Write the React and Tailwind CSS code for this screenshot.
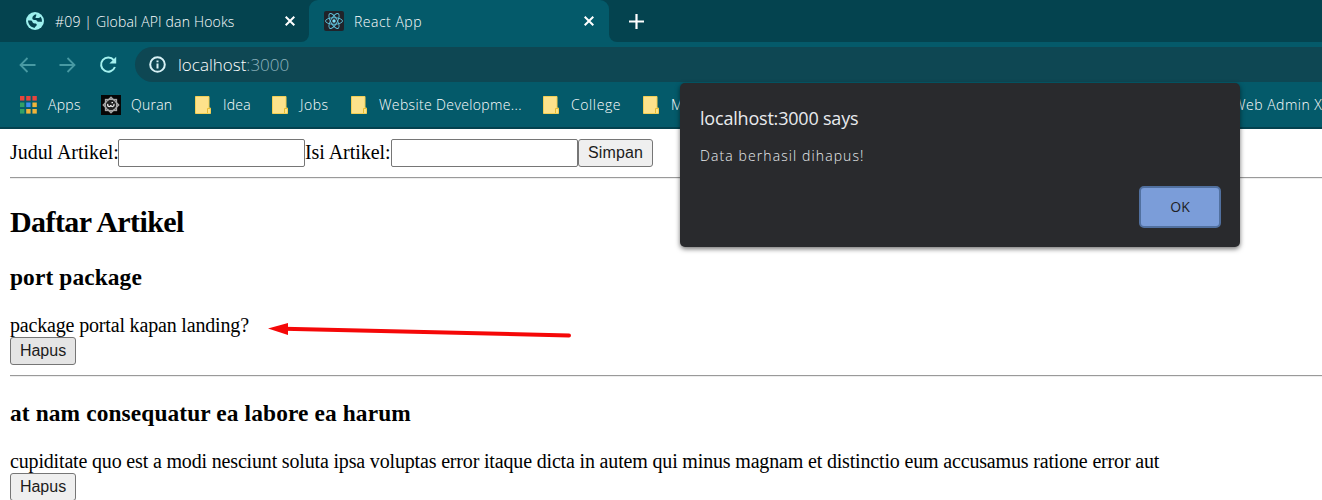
import React from "react";

const ui = "font-['Open_Sans',sans-serif] whitespace-nowrap";
const serif = "font-['Liberation_Serif',serif] whitespace-nowrap text-black";

function Globe() {
  return (
    <svg width="18" height="18" viewBox="0 0 18 18">
      <circle cx="9" cy="9" r="9" fill="#9df0ee" />
      <path d="M10.2 2.2C8 2.6 6.4 4.2 6.3 6.2C6.3 8 8 7.8 9.5 7.9C11 8 11 9.8 12.3 9.8H16A7 7 0 0 0 14.6 4.7C13.8 6 12 6.4 9.6 5.9C9.2 4.8 10.8 4 10.2 2.2Z" fill="#05434f" />
      <path d="M2 8.6C2.2 12.6 5 15.6 8.6 15.9C8.8 14.6 10.6 14.3 10.8 12.8C10.8 11.2 9 11.6 7.6 11.3C6.4 11 6.6 9 5.2 8.6Z" fill="#05434f" />
    </svg>
  );
}

function ReactLogo() {
  return (
    <svg width="20" height="20" viewBox="0 0 20 20">
      <rect width="20" height="20" rx="2" fill="#20232a" />
      <g fill="none" stroke="#61c5df" strokeWidth="0.9">
        <ellipse cx="10" cy="10" rx="8.5" ry="3.3" />
        <ellipse cx="10" cy="10" rx="8.5" ry="3.3" transform="rotate(60 10 10)" />
        <ellipse cx="10" cy="10" rx="8.5" ry="3.3" transform="rotate(120 10 10)" />
      </g>
      <circle cx="10" cy="10" r="1.7" fill="#7fe0f5" />
    </svg>
  );
}

function Close() {
  return (
    <svg width="10" height="10" viewBox="0 0 10 10" stroke="#fff" strokeWidth="2">
      <path d="M0.7 0.7 9.3 9.3M9.3 0.7 0.7 9.3" />
    </svg>
  );
}

function Folder() {
  return (
    <svg width="16" height="18" viewBox="0 0 16 18">
      <path d="M0.5 0.5H14V12H15.5V17.5H0.5Z" fill="#fde28b" stroke="#f2cf55" />
      <path d="M12.5 17V12.5H15.5" fill="none" stroke="#e6bd33" />
    </svg>
  );
}

function Quran() {
  return (
    <svg width="20" height="20" viewBox="0 0 20 20">
      <rect width="20" height="20" fill="#060606" />
      <g fill="none" stroke="#a9a9a9" strokeWidth="1.5">
        <rect x="4.6" y="4.6" width="10.8" height="10.8" />
        <rect x="4.6" y="4.6" width="10.8" height="10.8" transform="rotate(45 10 10)" />
      </g>
      <circle cx="10" cy="10" r="5" fill="#222" />
      <path d="M6.8 8.8C6 11.8 9.4 12.4 9.8 10.2C10.2 12.4 13.6 11.8 13 8.8M10.5 7.6H12" fill="none" stroke="#eee" strokeWidth="1.2" />
    </svg>
  );
}

const appColors = ["#e8453c", "#e8453c", "#e8453c", "#34a065", "#3f8cf0", "#f0b43a", "#34a065", "#f0b43a", "#f0b43a"];

function Apps() {
  return (
    <svg width="17" height="18" viewBox="0 0 17 18">
      {appColors.map((c, i) => (
        <rect key={i} x={(i % 3) * 6.2} y={Math.floor(i / 3) * 6.5} width="4.4" height="4.6" fill={c} />
      ))}
    </svg>
  );
}

function Bookmark({ icon, label, w, track, gap = 12 }) {
  return (
    <div className="flex shrink-0 items-center" style={{ width: w }}>
      {icon}
      <span className={`${ui} text-[14px] font-light leading-[20px] text-white`} style={{ letterSpacing: track, marginLeft: gap }}>
        {label}
      </span>
    </div>
  );
}

function NativeButton({ children, cls }) {
  return (
    <button className={`h-[28px] shrink-0 rounded-[3px] border border-[#767676] font-['Liberation_Sans',sans-serif] text-[16px] leading-[24px] text-[#1c1c1c] ${cls}`}>
      {children}
    </button>
  );
}

function Rule() {
  return <div className="h-[2px] border-t border-[#9a9a9a] bg-[#eeeeee]" />;
}

export default function App() {
  return (
    <div className="relative flex h-[500px] w-[1322px] flex-col overflow-hidden bg-white">
      <header className="flex h-[129px] shrink-0 flex-col border-b-2 border-[#04424f] bg-[#045a6a]">
        <div className="flex h-[42px] shrink-0 bg-[#045a6a]">
          <div className="flex h-[42px] w-[309px] items-center rounded-br-[8px] bg-[#04434f] pl-[26px]">
            <Globe />
            <span className={`${ui} ml-[11px] w-[230px] text-[14px] font-light text-white tracking-[0.17px]`}>#09 | Global API dan Hooks</span>
            <Close />
          </div>
          <div className="flex h-[42px] w-[300px] bg-[#04434f]">
            <div className="flex h-[42px] w-[300px] items-center rounded-t-[9px] bg-[#045a6a] pl-[15px]">
              <ReactLogo />
              <span className={`${ui} ml-[10px] w-[230px] text-[14px] font-light text-white tracking-[0.5px]`}>React App</span>
              <Close />
            </div>
          </div>
          <div className="flex h-[42px] grow items-center rounded-bl-[8px] bg-[#04434f] pl-[20px]">
            <svg width="15" height="15" viewBox="0 0 15 15" stroke="#fff" strokeWidth="2.2"><path d="M7.5 0V15M0 7.5H15" /></svg>
          </div>
        </div>
        <div className="flex h-[45px] shrink-0 items-center pl-[19px]">
          <svg width="17" height="16" viewBox="0 0 17 16" fill="none" stroke="#489aa3" strokeWidth="1.8"><path d="M16.5 8H1.5M8.5 1 1.5 8 8.5 15" /></svg>
          <svg className="ml-[23px]" width="17" height="16" viewBox="0 0 17 16" fill="none" stroke="#489aa3" strokeWidth="1.8"><path d="M0.5 8H15.5M8.5 1 15.5 8 8.5 15" /></svg>
          <svg className="ml-[23px]" width="18" height="18" viewBox="0 0 18 18"><path d="M14.8 4.2A7.1 7.1 0 1 0 15.9 11" fill="none" stroke="#a4f1ef" strokeWidth="2" /><path d="M17.2 0.8V7.4H10.4Z" fill="#a4f1ef" /></svg>
          <div className="ml-[18px] flex h-[35px] grow items-center rounded-l-full bg-[#0e4753] pl-[14px]">
            <svg width="17" height="17" viewBox="0 0 17 17"><circle cx="8.5" cy="8.5" r="7.3" fill="none" stroke="#d8f1f5" strokeWidth="2" /><path d="M8.5 7.5V12.5M8.5 4.4V6.3" stroke="#d8f1f5" strokeWidth="2" /></svg>
            <span className={`${ui} ml-[12px] text-[17px] font-light leading-[24px] text-white`}>localhost<span className="text-[#8fb5bf]">:3000</span></span>
          </div>
        </div>
        <div className="flex h-[36px] items-center overflow-hidden pl-[20px]">
          <Bookmark icon={<Apps />} label="Apps" w={81} track={0.3} gap={11} />
          <Bookmark icon={<Quran />} label="Quran" w={94} track={0.25} gap={10} />
          <Bookmark icon={<Folder />} label="Idea" w={77} track={0.2} />
          <Bookmark icon={<Folder />} label="Jobs" w={79} track={0.5} />
          <Bookmark icon={<Folder />} label="Website Developme..." w={192} track={0.36} />
          <Bookmark icon={<Folder />} label="College" w={100} track={0.6} />
          <Bookmark icon={<Folder />} label="M" w={590} track={0} />
          <span className={`${ui} text-[14px] font-light leading-[20px] text-white tracking-[0.5px]`}>Web Admin X</span>
        </div>
      </header>

      <main className={`${serif} flex flex-col pl-[10px] pt-[10px]`}>
        <div className="flex h-[28px] items-center text-[20px] leading-[24px] tracking-[-0.05px]">
          <label className="w-[108px] shrink-0 pb-[2px]">Judul Artikel:</label>
          <input className="h-[28px] w-[187px] shrink-0 rounded-[2px] border border-[#767676]" />
          <label className="w-[86px] shrink-0 pb-[2px]">Isi Artikel:</label>
          <input className="h-[28px] w-[187px] shrink-0 rounded-[2px] border border-[#767676]" />
          <NativeButton cls="w-[75px] bg-[#efefef] tracking-[0.1px]">Simpan</NativeButton>
        </div>
        <div className="pt-[10px]"><Rule /></div>
        <h2 className="mt-[25px] h-[36px] text-[30px] font-bold leading-[36px] tracking-[-0.58px]">Daftar Artikel</h2>
        <h3 className="mt-[23px] h-[28px] text-[23.4px] font-bold leading-[28px] tracking-[0.11px]">port package</h3>
        <p className="mt-[22px] h-[24px] text-[20px] leading-[24px] tracking-[-0.17px]">package portal kapan landing?</p>
        <div className="flex"><NativeButton cls="w-[66px] bg-[#e5e5e5] border-[#4f4f4f]">Hapus</NativeButton></div>
        <div className="pt-[10px]"><Rule /></div>
        <h3 className="mt-[22px] h-[28px] text-[23.4px] font-bold leading-[28px] tracking-[0.11px]">at nam consequatur ea labore ea harum</h3>
        <p className="mt-[22px] h-[24px] text-[20px] leading-[24px] tracking-[-0.167px]">cupiditate quo est a modi nesciunt soluta ipsa voluptas error itaque dicta in autem qui minus magnam et distinctio eum accusamus ratione error aut</p>
        <div className="flex"><NativeButton cls="w-[66px] bg-[#efefef]">Hapus</NativeButton></div>
      </main>

      <svg className="absolute left-[266px] top-[318px]" width="308" height="24" viewBox="0 0 308 24">
        <path d="M18 10.7 303 17.5" stroke="#f50808" strokeWidth="4" strokeLinecap="round" />
        <path d="M2 10.5 22 5V17Z" fill="#f50808" />
      </svg>

      <div role="dialog" className={`${ui} absolute left-[680px] top-[83px] flex h-[164px] w-[560px] flex-col rounded-[5px] bg-[#292a2d] pl-[20px] pr-[19px] pt-[22px] shadow-[0_2px_5px_rgba(0,0,0,0.55)]`}>
        <div className="h-[26px] text-[18px] leading-[26px] text-[#e8eaed] tracking-[-0.2px]">localhost:3000 says</div>
        <div className="mt-[15px] h-[20px] text-[14px] font-light leading-[20px] text-[#e8eaed] tracking-[1.1px]">Data berhasil dihapus!</div>
        <button className="mt-[20px] h-[42px] w-[82px] self-end rounded-[5px] border-2 border-[#51709f] bg-[#7b9dd9] pb-[1px] text-[14px] text-[#202124]">OK</button>
      </div>
    </div>
  );
}
